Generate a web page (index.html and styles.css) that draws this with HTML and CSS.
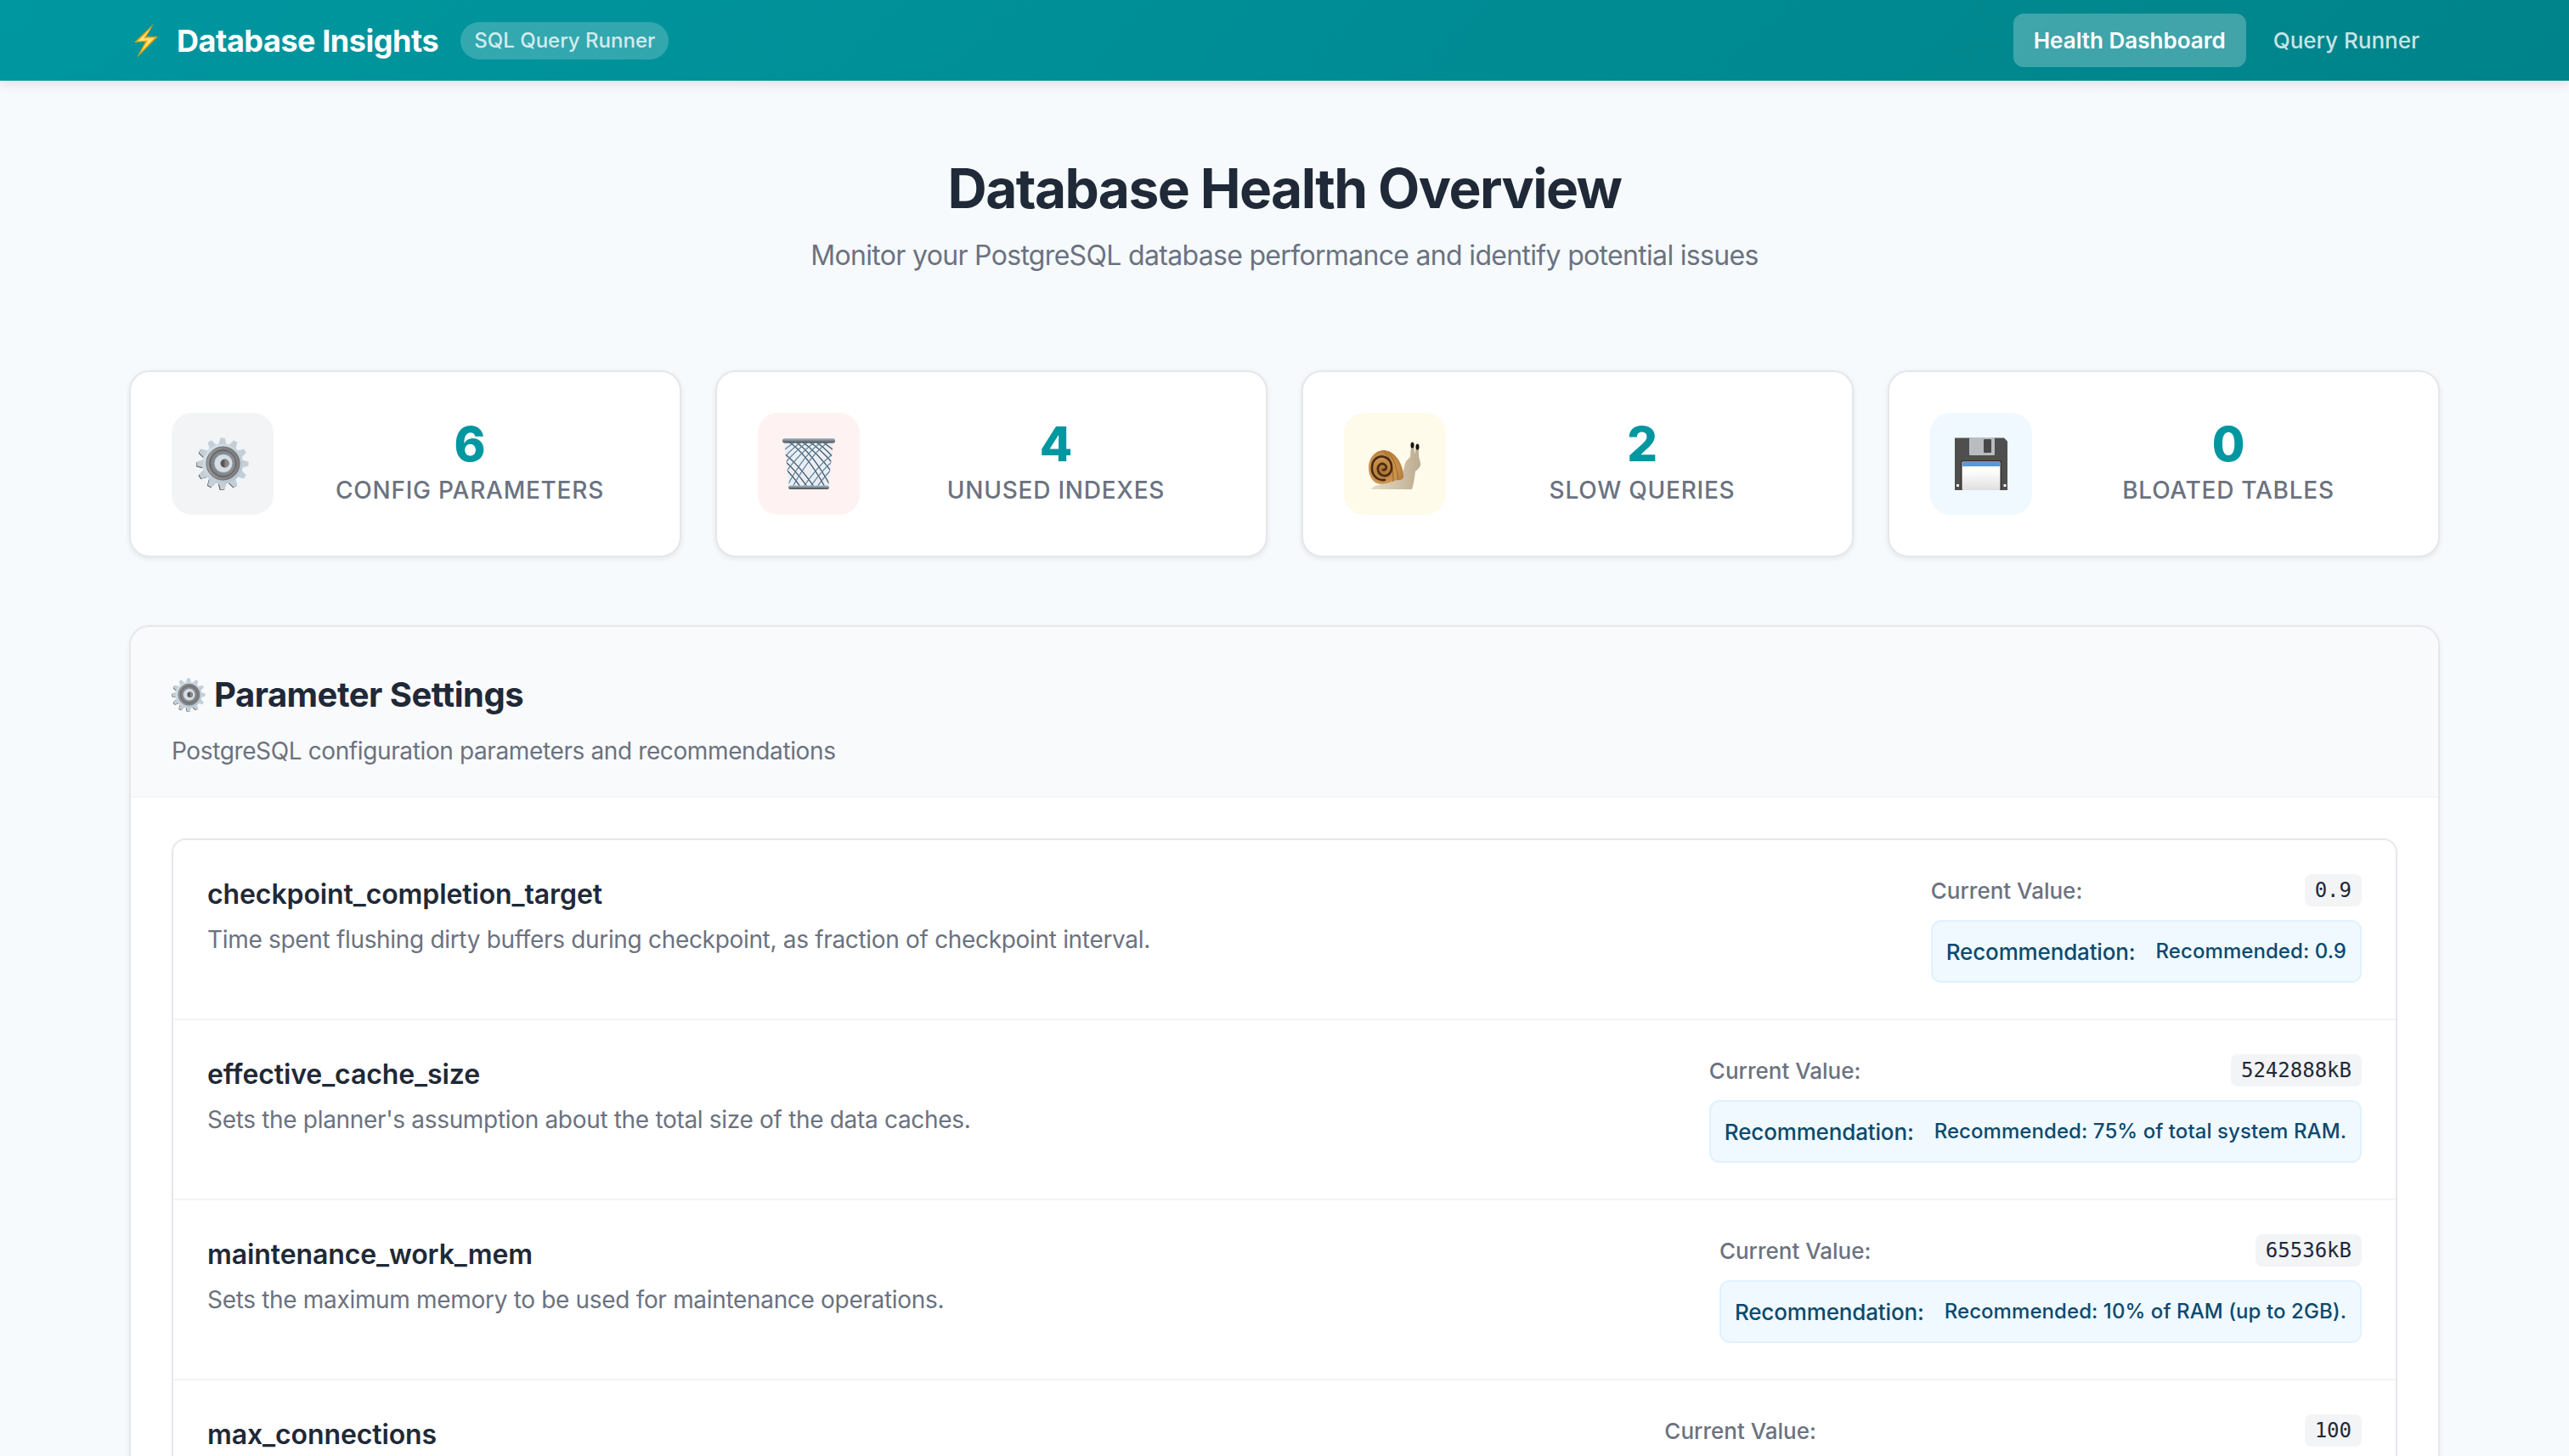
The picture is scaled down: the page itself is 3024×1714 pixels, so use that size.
FILE: index.html
```html
<!DOCTYPE html>
<html lang="en">
<head>
    <meta charset="UTF-8">
    <meta name="viewport" content="width=device-width, initial-scale=1.0">
    <title>Database Insights</title>
    <link rel="stylesheet" href="styles.css">
</head>
<body>
    <!-- shared gear, used by the first card and the section title -->
    <svg class="sprite" aria-hidden="true">
        <defs>
            <linearGradient id="gearMetal" x1="0" y1="0" x2="1" y2="1">
                <stop offset="0" stop-color="#dbe4eb"/>
                <stop offset="1" stop-color="#b3bfca"/>
            </linearGradient>
            <radialGradient id="gearDisc" cx="0.55" cy="0.5" r="0.55">
                <stop offset="0.4" stop-color="#8f9092"/>
                <stop offset="0.8" stop-color="#7d7e80"/>
                <stop offset="1" stop-color="#a9abad"/>
            </radialGradient>
            <path id="gearTooth" d="M26.5 8 L28.5 0.5 L33.5 0.5 L35.5 8 Z"/>
            <symbol id="gear" viewBox="0 0 62 62">
                <g fill="#4b4136" transform="translate(-0.7 0.7)">
                    <use href="#gearTooth" transform="rotate(150 31 31)"/>
                    <use href="#gearTooth" transform="rotate(180 31 31)"/>
                    <use href="#gearTooth" transform="rotate(210 31 31)"/>
                    <use href="#gearTooth" transform="rotate(240 31 31)"/>
                    <use href="#gearTooth" transform="rotate(270 31 31)"/>
                    <use href="#gearTooth" transform="rotate(300 31 31)"/>
                </g>
                <circle cx="31" cy="31" r="24" fill="url(#gearMetal)"/>
                <g fill="#c3cfd9">
                    <use href="#gearTooth"/>
                    <use href="#gearTooth" transform="rotate(30 31 31)"/>
                    <use href="#gearTooth" transform="rotate(60 31 31)"/>
                    <use href="#gearTooth" transform="rotate(90 31 31)"/>
                    <use href="#gearTooth" transform="rotate(120 31 31)"/>
                    <use href="#gearTooth" transform="rotate(150 31 31)"/>
                    <use href="#gearTooth" transform="rotate(180 31 31)"/>
                    <use href="#gearTooth" transform="rotate(210 31 31)"/>
                    <use href="#gearTooth" transform="rotate(240 31 31)"/>
                    <use href="#gearTooth" transform="rotate(270 31 31)"/>
                    <use href="#gearTooth" transform="rotate(300 31 31)"/>
                    <use href="#gearTooth" transform="rotate(330 31 31)"/>
                </g>
                <circle cx="31.5" cy="30.5" r="19.5" fill="url(#gearDisc)" stroke="#66676a" stroke-width="1"/>
                <circle cx="31.5" cy="30.5" r="15.5" fill="none" stroke="#55565a" stroke-width="1"/>
                <circle cx="32" cy="30.5" r="11" fill="#d3dee8" stroke="#85898d" stroke-width="0.8"/>
                <circle cx="33.5" cy="30.5" r="5" fill="#5a5654"/>
                <path d="M33.5 25.5a5 5 0 0 1 0 10" fill="#8a8683"/>
            </symbol>
        </defs>
    </svg>

    <div class="page">
        <header class="topbar">
            <div class="topbar-inner">
                <div class="brand">
                    <svg class="brand-icon" viewBox="0 0 28 40">
                        <polygon points="23,0 0,22 13,21 3,40 28,15 14,15" fill="#f59e0b"/>
                        <polygon points="20,5 4,20.5 16,19.5 8,33 24,16.5 11,17" fill="#ffe57a"/>
                    </svg>
                    <span class="brand-name">Database Insights</span>
                    <span class="brand-tag">SQL Query Runner</span>
                </div>
                <nav class="topnav">
                    <a class="topnav-link active" href="#">Health Dashboard</a>
                    <a class="topnav-link" href="#">Query Runner</a>
                </nav>
            </div>
        </header>

        <main class="content">
            <div class="hero">
                <h1>Database Health Overview</h1>
                <p>Monitor your PostgreSQL database performance and identify potential issues</p>
            </div>

            <div class="stats">
                <div class="stat-card">
                    <div class="stat-icon icon-grey">
                        <svg class="emoji" viewBox="0 0 62 62"><use href="#gear"/></svg>
                    </div>
                    <div class="stat-text">
                        <div class="stat-value">6</div>
                        <div class="stat-label">Config Parameters</div>
                    </div>
                </div>
                <div class="stat-card">
                    <div class="stat-icon icon-red">
                        <svg class="emoji" viewBox="0 0 62 62">
                            <defs>
                                <clipPath id="basket">
                                    <path d="M2 4H60L54 58H8Z"/>
                                </clipPath>
                                <linearGradient id="rim" x1="0" y1="0" x2="0" y2="1">
                                    <stop offset="0" stop-color="#a7bdd0"/>
                                    <stop offset="1" stop-color="#4c4c4c"/>
                                </linearGradient>
                            </defs>
                            <path d="M2 4H60L54 58H8Z" fill="#e8eef3"/>
                            <g clip-path="url(#basket)" fill="none" stroke="#3f4c59" stroke-width="1.2">
                                <path d="M-6 14Q14 24 40 62M-6 22Q10 30 32 62M6 4Q30 20 52 62M14 4Q36 18 58 60M22 4Q42 18 62 46M30 4Q46 14 64 36M38 4Q50 12 64 28M-6 30Q6 36 24 62M46 4Q54 10 64 18"/>
                                <path d="M68 14Q48 24 22 62M68 22Q52 30 30 62M56 4Q32 20 10 62M48 4Q26 18 4 60M40 4Q20 18 0 46M32 4Q16 14 -2 36M24 4Q12 12 -2 28M68 30Q56 36 38 62M16 4Q8 10 -2 18" stroke="#5a7f9e"/>
                            </g>
                            <rect x="0" y="1" width="62" height="5.5" rx="2.5" fill="url(#rim)"/>
                            <rect x="7" y="56.5" width="48" height="4.5" rx="2.2" fill="url(#rim)"/>
                        </svg>
                    </div>
                    <div class="stat-text">
                        <div class="stat-value">4</div>
                        <div class="stat-label">Unused Indexes</div>
                    </div>
                </div>
                <div class="stat-card">
                    <div class="stat-icon icon-yellow">
                        <svg class="emoji" viewBox="0 0 62 62">
                            <defs>
                                <radialGradient id="shell" cx="0.4" cy="0.6" r="0.7">
                                    <stop offset="0" stop-color="#a66d30"/>
                                    <stop offset="0.55" stop-color="#cd9750"/>
                                    <stop offset="1" stop-color="#a8702f"/>
                                </radialGradient>
                                <linearGradient id="snailBody" x1="0" y1="0" x2="1" y2="0">
                                    <stop offset="0" stop-color="#e6dcc6"/>
                                    <stop offset="1" stop-color="#bcac90"/>
                                </linearGradient>
                            </defs>
                            <path d="M3 61C4 58 9 56 16 55L36 50C40 46 41 36 44 28L49 23L50 8H53L54.500 20L56 9H59L59 22C60 27 62 31 61 33C60 36 57 38 55 40C54 48 53 56 51 61Z" fill="url(#snailBody)"/>
                            <ellipse cx="51.500" cy="9" rx="2" ry="3.600" fill="#17130f"/>
                            <ellipse cx="57.500" cy="11" rx="2" ry="3.600" fill="#17130f"/>
                            <path d="M0 36C0 24 8 15 18 15C30 15 41 30 41 46C41 49 38 50 34 50.500C28 51 22 55 15 55C6 55 0 46 0 36Z" fill="url(#shell)"/>
                            <path d="M23 18Q33 28 35 50M18 16Q30 28 29 52" fill="none" stroke="#9a6226" stroke-width="1"/>
                            <path d="M19 50C9 51 3 43 4 34C5 24 14 20 21 24C28 28 29 38 24 43C20 47 12 45 11 38C10 33 15 29 19 32C22 34 21 39 17 38" fill="none" stroke="#4a2a12" stroke-width="2.600" stroke-linecap="round"/>
                        </svg>
                    </div>
                    <div class="stat-text">
                        <div class="stat-value">2</div>
                        <div class="stat-label">Slow Queries</div>
                    </div>
                </div>
                <div class="stat-card">
                    <div class="stat-icon icon-blue">
                        <svg class="emoji" viewBox="0 0 62 62">
                            <defs>
                                <linearGradient id="label" x1="0" y1="0" x2="0" y2="1">
                                    <stop offset="0.3" stop-color="#ffffff"/>
                                    <stop offset="1" stop-color="#dfdfdf"/>
                                </linearGradient>
                            </defs>
                            <path d="M0 0.5H58L62 4.5V62H0Z" fill="#4f4f4f"/>
                            <rect x="17" y="0" width="30" height="21" rx="1.5" fill="#b9bdbf"/>
                            <rect x="34" y="2" width="9" height="16" rx="1" fill="#484848"/>
                            <rect x="7" y="27" width="48" height="35" rx="2" fill="#2f2f2f"/>
                            <rect x="8.5" y="28.5" width="45" height="33.5" rx="1" fill="url(#label)"/>
                            <rect x="9" y="29" width="44" height="5" fill="#5b96d8"/>
                            <rect x="2" y="55" width="3" height="3" fill="#f2f2f2"/>
                            <rect x="57.5" y="55" width="3" height="3" fill="#f2f2f2"/>
                        </svg>
                    </div>
                    <div class="stat-text">
                        <div class="stat-value">0</div>
                        <div class="stat-label">Bloated Tables</div>
                    </div>
                </div>
            </div>

            <section class="panel">
                <div class="panel-head">
                    <h2><svg class="title-gear" viewBox="0 0 62 62"><use href="#gear"/></svg> Parameter Settings</h2>
                    <p>PostgreSQL configuration parameters and recommendations</p>
                </div>
                <div class="panel-body">
                    <div class="param-list">
                        <div class="param-row">
                            <div class="param-info">
                                <h3>checkpoint_completion_target</h3>
                                <p>Time spent flushing dirty buffers during checkpoint, as fraction of checkpoint interval.</p>
                            </div>
                            <div class="param-side">
                                <div class="current">
                                    <span class="current-label">Current Value:</span>
                                    <code>0.9</code>
                                </div>
                                <div class="rec">
                                    <span class="rec-label">Recommendation:</span>
                                    <span class="rec-text">Recommended: 0.9</span>
                                </div>
                            </div>
                        </div>
                        <div class="param-row">
                            <div class="param-info">
                                <h3>effective_cache_size</h3>
                                <p>Sets the planner's assumption about the total size of the data caches.</p>
                            </div>
                            <div class="param-side">
                                <div class="current">
                                    <span class="current-label">Current Value:</span>
                                    <code>5242888kB</code>
                                </div>
                                <div class="rec">
                                    <span class="rec-label">Recommendation:</span>
                                    <span class="rec-text">Recommended: 75% of total system RAM.</span>
                                </div>
                            </div>
                        </div>
                        <div class="param-row">
                            <div class="param-info">
                                <h3>maintenance_work_mem</h3>
                                <p>Sets the maximum memory to be used for maintenance operations.</p>
                            </div>
                            <div class="param-side">
                                <div class="current">
                                    <span class="current-label">Current Value:</span>
                                    <code>65536kB</code>
                                </div>
                                <div class="rec">
                                    <span class="rec-label">Recommendation:</span>
                                    <span class="rec-text">Recommended: 10% of RAM (up to 2GB).</span>
                                </div>
                            </div>
                        </div>
                        <div class="param-row">
                            <div class="param-info">
                                <h3>max_connections</h3>
                                <p>Sets the maximum number of concurrent connections.</p>
                            </div>
                            <div class="param-side">
                                <div class="current">
                                    <span class="current-label">Current Value:</span>
                                    <code>100</code>
                                </div>
                                <div class="rec">
                                    <span class="rec-label">Recommendation:</span>
                                    <span class="rec-text">Recommended: Adjust based on the workload.</span>
                                </div>
                            </div>
                        </div>
                    </div>
                </div>
            </section>
        </main>
    </div>
</body>
</html>
```

FILE: styles.css
```css
* {
    box-sizing: border-box;
}

body {
    margin: 0;
    background-color: #f6fafc;
    color: #1f2937;
    font-family: "Inter", "Noto Sans", sans-serif;
    font-size: 28px;
    line-height: 1.5;
}

/* holds the hidden gear symbol */
.sprite {
    position: absolute;
    width: 0;
    height: 0;
}

/* the screenshot stops at the window edge */
.page {
    height: 100vh;
    overflow: hidden;
}

/* top bar */
.topbar {
    height: 95px;
    background: linear-gradient(135deg, #0097a0 0%, #00838a 100%);
    box-shadow: 0 4px 12px rgba(0, 0, 0, 0.1);
}

.topbar-inner {
    display: flex;
    align-items: center;
    justify-content: space-between;
    height: 100%;
    padding: 0 152px;
}

.brand {
    display: flex;
    align-items: center;
}

.brand-icon {
    width: 28px;
    height: 40px;
    margin: 0 22px 0 6px;
}

.brand-name {
    color: #ffffff;
    font-size: 36px;
    font-weight: 700;
    letter-spacing: -0.45px;
}

.brand-tag {
    margin-left: 26px;
    padding: 0 16px;
    height: 44px;
    line-height: 44px;
    border-radius: 22px;
    background: rgba(255, 255, 255, 0.2);
    color: rgba(255, 255, 255, 0.8);
    font-size: 24px;
    font-weight: 500;
}

.topnav {
    display: flex;
    gap: 8px;
}

.topnav-link {
    padding: 0 24px;
    height: 63px;
    line-height: 63px;
    border-radius: 12px;
    color: rgba(255, 255, 255, 0.8);
    font-size: 26px;
    font-weight: 500;
    text-decoration: none;
}

.topnav-link.active {
    background: rgba(255, 255, 255, 0.25);
    color: #ffffff;
    font-weight: 600;
}

/* page body */
.content {
    padding: 0 152px;
}

.hero {
    padding-top: 88px;
    margin-bottom: 111px;
    text-align: center;
}

.hero h1 {
    margin: 0 0 16px;
    color: #1f2937;
    font-size: 64px;
    font-weight: 700;
    line-height: 78px;
    letter-spacing: -1.6px;
}

.hero p {
    margin: 0;
    color: #6b7280;
    font-size: 32px;
    line-height: 48px;
    letter-spacing: -0.68px;
}

/* summary cards */
.stats {
    display: grid;
    grid-template-columns: repeat(4, 1fr);
    gap: 40px;
    margin-bottom: 80px;
}

.stat-card {
    display: flex;
    align-items: center;
    gap: 32px;
    padding: 48px;
    background: #ffffff;
    border: 2px solid #e5e7eb;
    border-radius: 24px;
    box-shadow: 0 2px 6px rgba(0, 0, 0, 0.08);
}

.stat-icon {
    display: flex;
    flex: none;
    align-items: center;
    justify-content: center;
    width: 120px;
    height: 120px;
    border-radius: 24px;
}

.icon-grey { background: #f3f4f6; }
.icon-red { background: #fef2f2; }
.icon-yellow { background: #fffbeb; }
.icon-blue { background: #f0f9ff; }

.emoji {
    width: 62px;
    height: 62px;
}

.stat-text {
    flex: 1;
    text-align: center;
}

.stat-value {
    color: #0097a0;
    font-size: 56px;
    font-weight: 800;
    line-height: 62px;
}

.stat-label {
    color: #6b7280;
    font-size: 28px;
    font-weight: 500;
    line-height: 46px;
    letter-spacing: 0.75px;
    text-transform: uppercase;
}

/* parameter section */
.panel {
    background: #ffffff;
    border: 2px solid #e5e7eb;
    border-radius: 24px;
    box-shadow: 0 2px 6px rgba(0, 0, 0, 0.06);
}

.panel-head {
    padding: 50px 48px 32px;
    background: #f9fafb;
    border-bottom: 2px solid #f3f4f6;
    border-radius: 22px 22px 0 0;
}

.panel-head h2 {
    display: flex;
    align-items: center;
    gap: 10px;
    margin: 0 0 15px;
    color: #1f2937;
    font-size: 40px;
    font-weight: 700;
    line-height: 60px;
    letter-spacing: -0.5px;
}

.title-gear {
    width: 40px;
    height: 40px;
}

.panel-head p {
    margin: 0;
    color: #6b7280;
    font-size: 28px;
    line-height: 42px;
    letter-spacing: -0.38px;
}

.panel-body {
    padding: 48px;
}

.param-list {
    border: 2px solid #e5e7eb;
    border-radius: 16px;
}

.param-row {
    display: flex;
    justify-content: space-between;
    gap: 40px;
    padding: 40px 40px 42px;
    border-bottom: 2px solid #f3f4f6;
}

.param-info h3 {
    margin: 0 0 8px;
    color: #1f2937;
    font-size: 32px;
    font-weight: 600;
    line-height: 48px;
    letter-spacing: -0.1px;
}

.param-info p {
    margin: 0;
    color: #6b7280;
    font-size: 28px;
    line-height: 42px;
    letter-spacing: -0.32px;
}

.param-side {
    display: flex;
    flex: none;
    flex-direction: column;
    gap: 16px;
}

.current {
    display: flex;
    align-items: center;
    justify-content: space-between;
    height: 38px;
}

.current-label {
    color: #6b7280;
    font-size: 26px;
    font-weight: 500;
}

code {
    padding: 0 12px;
    height: 38px;
    line-height: 38px;
    border-radius: 8px;
    background: #f3f4f6;
    color: #1f2937;
    font-family: "DejaVu Sans Mono", "Liberation Mono", monospace;
    font-size: 24px;
}

.rec {
    display: flex;
    align-items: center;
    gap: 24px;
    height: 74px;
    padding: 0 16px;
    background: #f0f9ff;
    border: 2px solid #e0f2fe;
    border-radius: 12px;
    color: #0c4a6e;
}

.rec-label {
    font-size: 26px;
    font-weight: 550;
    letter-spacing: -0.15px;
}

.rec-text {
    font-size: 24px;
    font-weight: 500;
    letter-spacing: 0.07px;
}
```
